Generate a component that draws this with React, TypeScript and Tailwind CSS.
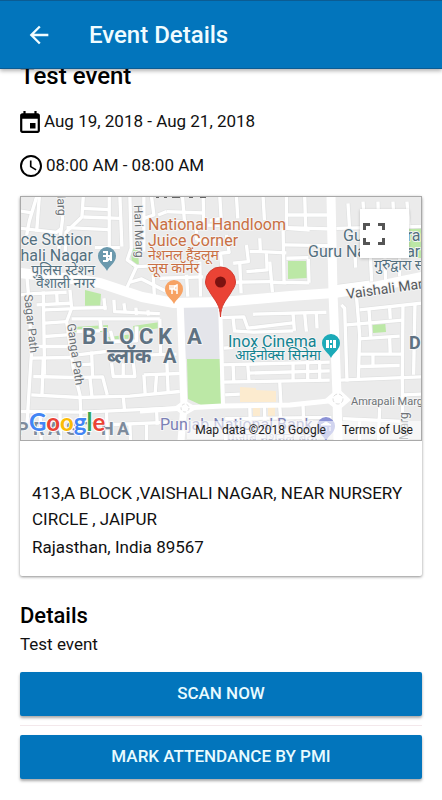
type Label = {
  x: number
  y: number
  text: string
  className: string
  rotate?: number
  anchor?: 'start' | 'middle' | 'end'
}

/** Side streets on a three times finer grid than the rest of the map */
const STREETS = [
  // north west
  'M50 5 28 78 20 120', 'M0 48 36 54', 'M58 5 50 110', 'M0 100 110 112 125 100', 'M118 5 128 70 116 165', 'M190 5 186 66 138 112 135 190',
  'M186 40 270 44', 'M140 98 268 104', 'M190 66 300 70', 'M268 5 268 160', 'M300 5 306 155', 'M330 5 334 160 322 195 350 215',
  'M225 158 300 158', 'M350 215 318 285', 'M350 215 420 212', 'M330 262 365 252 440 290', 'M372 5V170', 'M395 5 402 60 372 70',
  // north
  'M440 50 550 54', 'M488 5 494 80 530 88V135', 'M455 80 490 80', 'M415 60 440 50', 'M550 5 552 90 630 92', 'M600 5 604 70 570 76',
  'M650 5 654 70', 'M730 5 734 75', 'M800 5V100L870 105', 'M855 5 858 100', 'M800 60 930 60', 'M800 98 935 102', 'M795 150 930 152',
  'M530 135 620 140', 'M620 120 628 172 602 175 606 215', 'M680 150 686 200 640 205', 'M720 130 722 170 800 174', 'M690 170 722 170',
  'M740 175 742 225 680 230', 'M750 200 758 292', 'M660 205 664 295', 'M790 100 793 262 868 264', 'M866 192 868 264', 'M800 190 866 188',
  'M400 240 404 310', 'M500 240 504 305', 'M540 200 542 305', 'M420 250 550 246', 'M760 262 800 264', 'M640 262 758 260',
  // north east
  'M985 25 990 105', 'M1005 160 1008 218', 'M1030 20 1034 80', 'M1075 20 1076 60', 'M1120 20 1122 60', 'M1162 20 1168 90', 'M950 100 1206 94',
  'M1052 180 1056 260', 'M1096 190 1098 255', 'M1140 190V245', 'M950 275 1050 262',
  // west of the block
  'M0 300 40 296 140 292', 'M20 235 28 330 34 480 24 640 20 700', 'M150 285 155 340 140 380 160 520 180 600 186 741', 'M110 290 112 330',
  'M50 330 150 325', 'M70 290 74 540', 'M74 345 150 342', 'M74 385 140 380', 'M74 425 142 420', 'M50 455 150 455', 'M30 490 155 488',
  'M40 545 170 548', 'M34 600 180 608 330 604 480 590', 'M0 650 190 652 460 640', 'M70 490 66 600', 'M150 340 260 338',
  'M155 372 420 372', 'M252 310 256 345', 'M282 315 284 350 420 356', 'M312 325 316 352', 'M348 338 350 360', 'M384 346 386 362',
  'M240 372 244 408', 'M272 408 280 440 350 438 350 395', 'M170 410 240 408', 'M172 480 260 470', 'M215 470 218 545', 'M172 510 218 508',
  'M275 505 280 545 345 545 340 500', 'M310 505V545', 'M172 548 248 546 262 600', 'M210 548 216 604', 'M420 372 422 480',
  'M372 540 376 600', 'M372 540 480 536', 'M410 540 406 595', 'M440 480 445 596', 'M390 480 470 478', 'M310 604 314 648',
  'M410 640 412 690', 'M265 690 460 682', 'M60 655 64 741', 'M120 655 122 741', 'M330 690 332 741', 'M380 690V741', 'M260 650 262 741',
  // east of the park
  'M604 368 672 366 684 400 820 384', 'M640 370 644 408', 'M640 408 700 412 820 408', 'M820 358 824 408', 'M700 358 920 352', 'M855 356 860 410',
  'M890 355 892 400', 'M604 510 930 502', 'M604 562 930 556', 'M612 460 640 458', 'M640 510 642 562', 'M684 510 688 562', 'M684 535 930 528',
  'M820 504V556', 'M864 504V556', 'M900 504V556', 'M780 562 784 635', 'M616 600 660 598', 'M690 635 692 700', 'M734 635 736 700', 'M780 635 784 690',
  'M616 672 935 668', 'M850 632 852 690', 'M616 700 618 741', 'M700 700 702 741',
  // south east
  'M965 330 975 340 982 560', 'M1010 300 1020 420 1016 556', 'M1020 345 1206 325', 'M980 390 1150 376', 'M1048 345 1054 432', 'M1110 340 1112 372',
  'M1016 432 1140 424', 'M1016 478 1150 478', 'M1016 515 1140 512', 'M1060 478V512', 'M1110 430 1112 480', 'M1150 330 1148 560 1150 741',
  'M1186 330 1182 540', 'M960 556 1206 546', 'M970 672 1150 680', 'M1080 640 1076 741', 'M1020 680V741', 'M1150 600 1206 598',
]

const MAIN_ROADS = [
  { d: 'M20 273 72 279 100 283 142 297 174 303 222 302 290 296 334 293 374 287 422 277', w: 10 },
  { d: 'M331 196 333 293 337 395 338 441', w: 9 },
  { d: 'M180 300 184 405 181 441', w: 7 },
  { d: 'M140 411 184 408 222 406 290 405 338 400', w: 5 },
  { d: 'M220 301 223 406', w: 4 },
]

const PARKS = [
  '131,248 138,248 139,267 132,267',
  '85,290 101,294 100,309 85,307',
  '288,261 307,261 307,278 288,279',
  '405,225 422,225 422,258 405,258',
  '187,359 220,359 221,405 201,405 188,399',
  '74,327 108,325 108,332 74,332',
  '133,326 160,322 160,328 134,332',
  '108,337 134,334 134,340 110,341',
  '372,322 385,320 386,332 373,333',
]

const PLACE = 'text-[16px] fill-[#53707f]'
const ROAD = 'text-[12px] fill-[#6e7377]'

const LABELS: Label[] = [
  { x: 92, y: 245, text: 'ce Station', className: PLACE, anchor: 'end' },
  { x: 93, y: 261, text: 'hali Nagar', className: PLACE, anchor: 'end' },
  { x: 95, y: 275, text: 'पुलिस स्टेशन', className: 'text-[14px] fill-[#53707f]', anchor: 'end' },
  { x: 95, y: 288, text: 'वैशाली नगर', className: 'text-[14px] fill-[#53707f]', anchor: 'end' },
  { x: 148, y: 230, text: 'National Handloom', className: 'text-[16px] fill-[#c96f43]' },
  { x: 148, y: 246, text: 'Juice Corner', className: 'text-[16px] fill-[#c96f43]' },
  { x: 148, y: 260, text: 'नेशनल हैंडलूम', className: 'text-[14px] fill-[#c96f43]' },
  { x: 148, y: 273, text: 'जूस कॉर्नर', className: 'text-[14px] fill-[#c96f43]' },
  { x: 343, y: 241, text: 'Gurudwara', className: PLACE },
  { x: 308, y: 257, text: 'Guru Nanak Dar', className: PLACE },
  { x: 374, y: 270, text: 'गुरुद्वारा स', className: 'text-[14px] fill-[#53707f]' },
  { x: 347, y: 299, text: 'Vaishali Mar', className: 'text-[14px] fill-[#55595c]', rotate: -8 },
  { x: 228, y: 347, text: 'Inox Cinema', className: 'text-[16px] fill-[#128391]' },
  { x: 235, y: 360, text: 'आईनोक्स सिनेमा', className: 'text-[14px] fill-[#128391]' },
  { x: 107, y: 363, text: 'ब्लॉक', className: 'text-[20px] font-bold fill-[#5f7282]' },
  { x: 163, y: 363, text: 'A', className: 'text-[20px] font-bold fill-[#5f7282]' },
  { x: 409, y: 349, text: 'D', className: 'text-[18px] font-bold fill-[#5f7282]' },
  { x: 160, y: 430, text: 'Punjab National Bank', className: 'text-[16px] fill-[#7b80b5]' },
  { x: 227, y: 443, text: 'पंजाब नेशनल बैंक', className: 'text-[14px] fill-[#b9bbcf]' },
  { x: 351, y: 405, text: 'Amrapali Marg', className: 'text-[11px] fill-[#6e7377]' },
  { x: 134, y: 205, text: 'Hari Marg', className: ROAD, rotate: 88 },
  { x: 57, y: 188, text: 'Marg', className: ROAD, rotate: 88 },
  { x: 24, y: 295, text: 'Sagar Path', className: ROAD, rotate: 84 },
  { x: 67, y: 324, text: 'Ganga Path', className: ROAD, rotate: 82 },
  { x: 408, y: 440, text: 'Marg', className: ROAD, rotate: -90 },
]

const GOOGLE = [
  { letter: 'G', className: 'fill-[#4285f4]' },
  { letter: 'o', className: 'fill-[#ea4335]' },
  { letter: 'o', className: 'fill-[#fbbc05]' },
  { letter: 'g', className: 'fill-[#4285f4]' },
  { letter: 'l', className: 'fill-[#34a853]' },
  { letter: 'e', className: 'fill-[#ea4335]' },
]

function PoiPin({ x, y, fill, children }: { x: number; y: number; fill: string; children?: React.ReactNode }) {
  return (
    <g transform={`translate(${x} ${y})`}>
      <path d="M0 14C-2 9-9 6-9-1a9 9 0 0 1 18 0C9 6 2 9 0 14Z" fill={fill} />
      {children}
    </g>
  )
}

function EventMap() {
  return (
    <svg
      viewBox="21 197 400 243"
      preserveAspectRatio="xMidYMid slice"
      className="block h-full w-full font-['Roboto','Noto_Sans','Noto_Sans_Devanagari',sans-serif]"
      role="img"
      aria-label="Map"
    >
      <rect x="0" y="180" width="460" height="280" fill="#ebebeb" />
      <polygon points="183,303 219,303 221,359 185,359" fill="#e4e5ea" />
      {PARKS.map((points) => (
        <polygon key={points} points={points} fill="#bce8a6" />
      ))}
      <path d="M240 387 256 388 256 390 276 391V402H240ZM253 407h7v10h-7ZM268 407h7v10h-7Z" fill="#fcebcf" />

      <g fill="none" strokeLinejoin="round">
        <g transform="translate(20 195) scale(.333)">
          <g stroke="#e0e1e1" strokeWidth="14">
            {STREETS.map((d) => (
              <path key={d} d={d} />
            ))}
          </g>
          <g stroke="#fff" strokeWidth="10">
            {STREETS.map((d) => (
              <path key={d} d={d} />
            ))}
          </g>
        </g>
        {MAIN_ROADS.map((road) => (
          <path key={road.d} d={road.d} stroke="#fff" strokeWidth={road.w} />
        ))}
      </g>
      {/* roundabouts */}
      <path d="M173 408 184 400 198 408 184 416ZM324 400 338 388 351 400 338 411Z" fill="#fff" />
      <circle cx="185" cy="408" r="4" fill="none" stroke="#dedede" strokeDasharray="3 2" />
      <circle cx="338" cy="399" r="5" fill="none" stroke="#dedede" strokeDasharray="4 2" />
      <path d="M156 197h3v1h-3ZM164 197h3v1h-3ZM172 197h8v1h-8ZM189 197h4v1h-4ZM200 197h6v1h-6Z" fill="#666" />

      <g stroke="#f5f5f5" strokeWidth="2" strokeLinejoin="round" paintOrder="stroke">
        {LABELS.map((label) => (
          <text
            key={label.text + label.x}
            x={label.x}
            y={label.y}
            textAnchor={label.anchor}
            transform={label.rotate ? `rotate(${label.rotate} ${label.x} ${label.y})` : undefined}
            className={label.className}
          >
            {label.text}
          </text>
        ))}
        <text x="82 102 119 139 158 174 187" y="344" className="fill-[#5f7282] text-[22px] font-bold">
          BLOCK A
        </text>
        <text x="17 33 48 66 83 101 117" y="435" className="fill-[#7d8b9c] text-[18px] font-bold">
          PRASTHA
        </text>
      </g>

      <PoiPin x={107} y={257} fill="#6b99ad">
        <path d="M-4-5h4v4h4M4-5v4M-4-1h4v5M-4 4h4l4-4v4" fill="none" stroke="#fff" strokeWidth="2" />
      </PoiPin>
      <PoiPin x={174} y={290} fill="#f7a263">
        <path d="M-4-5v4h4v-4M-2-5V4M3 4V-5q-3 1-2 5h2" fill="none" stroke="#fff" strokeWidth="1.500" />
      </PoiPin>
      <PoiPin x={331} y={344} fill="#1caab8">
        <path d="M-5-4h3v8h-3ZM2-4h3v8H2ZM-1-4h2v3h-2ZM-1 1h2v3h-2Z" fill="#fff" />
      </PoiPin>
      <PoiPin x={326} y={427} fill="#8c93d6">
        <path d="M-5-2 0-5 5-2ZM-4 0v4M0 0v4M4 0v4" fill="#fff" stroke="#fff" />
      </PoiPin>

      {/* event location */}
      <path
        d="M220.500 317C220 305 216 302 211 294C208 289 205.500 286 205.500 282a15 15 0 0 1 30 0C235.500 286 233 289 230 294C225 302 221 305 220.500 317Z"
        fill="#ea4335"
        stroke="#d33a2e"
      />
      <circle cx="220.500" cy="282" r="5.500" fill="#7c1210" />

      <text
        x="29"
        y="431"
        stroke="#fff"
        strokeWidth="2"
        paintOrder="stroke"
        className="font-['Lato',sans-serif] text-[24px] font-bold"
      >
        {GOOGLE.map((part, i) => (
          <tspan key={i} className={part.className}>
            {part.letter}
          </tspan>
        ))}
      </text>
    </svg>
  )
}

function ActionButton({ children }: { children: string }) {
  return (
    <button
      type="button"
      className="h-11 w-full rounded-[2px] bg-[#0275bc] text-[17px] font-medium text-[#e8fbff] shadow-[0_2px_3px_rgba(0,0,0,0.35)]"
    >
      {children}
    </button>
  )
}

export default function App() {
  return (
    <div className="min-h-screen bg-white font-['Roboto',sans-serif] text-[17px] text-[#111]">
      <header className="relative z-10 flex h-[69px] items-center gap-9 border-y border-[#0b5c93] bg-[#0275bc] px-[25px] shadow-[0_2px_4px_rgba(0,0,0,0.3)]">
        <button type="button" aria-label="Back" className="text-[#f0fcff]">
          <svg viewBox="0 0 24 24" className="size-7" fill="currentColor">
            <path d="M20 11H7.830l5.590-5.590L12 4l-8 8 8 8 1.410-1.410L7.830 13H20v-2z" />
          </svg>
        </button>
        <h1 className="text-[24px] font-medium text-[#f0fcff]">Event Details</h1>
      </header>

      <main className="px-5 pb-5">
        <h2 className="-mt-[9px] mb-2 text-[24px] leading-8 font-medium text-black">Test event</h2>

        <div className="flex h-11 items-center gap-1">
          <svg viewBox="3 1 18 20" className="h-[22px] w-5 shrink-0" fill="black">
            <path d="M17 12h-5v5h5v-5zM16 1v2H8V1H6v2H5c-1.110 0-2 .9-2 2v14c0 1.100.89 2 2 2h14c1.100 0 2-.9 2-2V5c0-1.100-.9-2-2-2h-1V1h-2zm3 18H5V8h14v11z" />
          </svg>
          Aug 19, 2018 - Aug 21, 2018
        </div>
        <div className="flex h-11 items-center gap-1">
          <svg viewBox="2 2 20 20" className="size-[22px] shrink-0" fill="black">
            <path d="M11.990 2C6.470 2 2 6.480 2 12s4.470 10 9.990 10C17.520 22 22 17.520 22 12S17.520 2 11.990 2zM12 20.200a8.200 8.200 0 1 1 0-16.400 8.200 8.200 0 0 1 0 16.400zM12.500 7H11v6l5.250 3.150.75-1.230-4.500-2.670z" />
          </svg>
          08:00 AM - 08:00 AM
        </div>

        <section className="mt-2 rounded-[2px] shadow-[0_1px_3px_rgba(0,0,0,0.45)]">
          <div className="relative h-[245px] overflow-hidden border border-[#a9a9a9]">
            <EventMap />
            <button
              type="button"
              aria-label="Toggle fullscreen view"
              className="absolute top-3 right-3 flex size-[49px] items-center bg-white pl-[3px] shadow-[0_1px_3px_rgba(0,0,0,0.2)]"
            >
              <svg viewBox="0 0 22 22" className="size-[22px]" fill="none" stroke="#555" strokeWidth="3">
                <path d="M1.500 7V1.500H7M15 1.500h5.500V7M20.500 15v5.500H15M7 20.500H1.500V15" />
              </svg>
            </button>
            <div className="absolute right-0 bottom-0 flex h-5 items-center text-[12px] text-[#222]">
              <span className="bg-white/60 px-2">Map data ©2018 Google</span>
              <a href="#terms" className="bg-white/60 px-2">
                Terms of Use
              </a>
            </div>
          </div>
          <div className="px-3 pt-[39px] pb-4 leading-[26px]">
            <p>413,A BLOCK ,VAISHALI NAGAR, NEAR NURSERY CIRCLE , JAIPUR</p>
            <p className="mt-0.5">Rajasthan, India 89567</p>
          </div>
        </section>

        <h3 className="mt-6 text-[22px] leading-8 font-medium text-black">Details</h3>
        <p className="leading-6">Test event</p>

        <div className="mt-4 flex flex-col gap-[9px]">
          <ActionButton>SCAN NOW</ActionButton>
          <hr className="border-[#f3e8eb]" />
          <ActionButton>MARK ATTENDANCE BY PMI</ActionButton>
        </div>
      </main>
    </div>
  )
}
